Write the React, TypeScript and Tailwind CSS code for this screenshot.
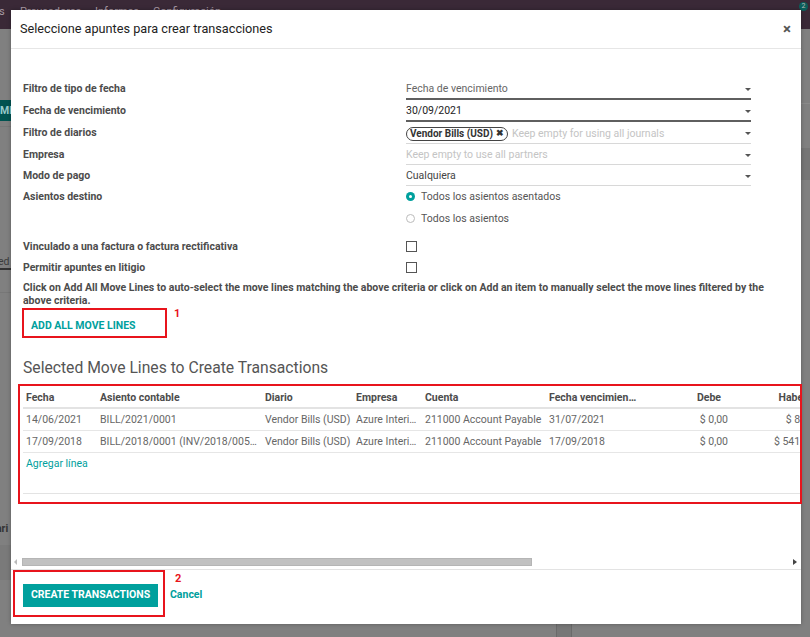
import React from "react";

const Caret = () => (
  <span className="ml-auto mr-0 inline-block w-0 h-0 border-x-[3px] border-x-transparent border-t-[3px] border-t-[#555]" />
);

function FieldRow({ label, children, h = "h-[22px]" }: any) {
  return (
    <div className={`flex items-center ${h}`}>
      <div className="w-[383px] text-[10.5px] font-bold text-[#4c4c4c]">{label}</div>
      <div className="w-[345px] h-full">{children}</div>
    </div>
  );
}

function Select({ children, dark = false }: any) {
  return (
    <div
      className={`h-full flex items-center text-[10.5px] pt-[2px] ${
        dark ? "border-b-2 border-[#5f5f5f]" : "border-b border-[#d8d8d8]"
      }`}
    >
      {children}
      <Caret />
    </div>
  );
}

const cols = [
  { t: "Fecha", w: "w-[74px]" },
  { t: "Asiento contable", w: "w-[165px]" },
  { t: "Diario", w: "w-[91px]" },
  { t: "Empresa", w: "w-[69px]" },
  { t: "Cuenta", w: "w-[124px]" },
  { t: "Fecha vencimien…", w: "w-[102px]" },
  { t: "Debe", w: "w-[85px]", r: true },
  { t: "Haber", w: "w-[86px]", r: true },
];

const rows = [
  ["14/06/2021", "BILL/2021/0001", "Vendor Bills (USD)", "Azure Interi…", "211000 Account Payable", "31/07/2021", "$ 0,00", "$ 8,50"],
  ["17/09/2018", "BILL/2018/0001 (INV/2018/005…", "Vendor Bills (USD)", "Azure Interi…", "211000 Account Payable", "17/09/2018", "$ 0,00", "$ 541,00"],
];

export default function App() {
  return (
    <div className="relative w-[810px] h-[637px] overflow-hidden bg-[#808080] font-['Roboto',sans-serif]">
      {/* page behind the dialog */}
      <div className="h-[29px] bg-[#3a2937] flex items-start pt-[4px] text-[11px] text-[#a89aa5]">
        <span className="-ml-[1px] w-[21px]">s</span>
        <span className="w-[75px]">Proveedores</span>
        <span className="w-[58px]">Informes</span>
        <span>Configuración</span>
      </div>
      <div className="absolute right-[2px] top-[2px] w-[9px] h-[9px] rounded-full bg-[#0a5e5a] text-[7px] text-[#bbb] flex items-center justify-center">2</div>
      <div className="absolute left-0 top-[100px] w-[11px] h-[21px] bg-[#005351] text-[10.5px] text-[#9cc] overflow-hidden leading-[21px] font-bold">ME</div>
      <div className="absolute left-0 top-[126px] w-[11px] border-t border-[#777]" />
      <div className="absolute left-0 top-[255px] w-[11px] overflow-hidden text-[10.5px] text-[#3c3c3c] border-b-2 border-[#333] leading-[13px] whitespace-nowrap">
        <span className="-ml-[2px]">ed</span>
      </div>
      <div className="absolute left-0 top-[292px] w-[11px] border-t border-[#777]" />
      <div className="absolute left-0 top-[521px] w-[11px] overflow-hidden text-[10.5px] text-[#333] font-bold whitespace-nowrap">
        <span className="-ml-[4px]">ari</span>
      </div>
      <div className="absolute left-0 top-[545px] w-[11px] h-[35px] bg-[#7a7a7a]" />
      <div className="absolute right-0 top-[103px] w-[9px] border-t border-[#8a8a8a]" />
      <div className="absolute right-0 top-[148px] w-[9px] h-[32px] bg-[#767676]" />
      <div className="absolute left-[556px] top-[624px] w-[16px] h-[13px] bg-[#777] border-x border-[#6a6a6a]" />

      {/* dialog */}
      <div className="absolute left-[11px] top-[10px] w-[790px] h-[614px] bg-white flex flex-col shadow-[0_0_4px_rgba(0,0,0,0.3)]">
        <div className="h-[39px] shrink-0 flex items-center justify-between pl-[9px] pr-[10px] border-b border-[#e6e6e6]">
          <div className="text-[12.7px] text-[#222]">Seleccione apuntes para crear transacciones</div>
          <div className="text-[15px] font-bold text-[#555] leading-none">×</div>
        </div>

        <div className="flex-1 flex flex-col pt-[29px] pl-[12px] overflow-hidden">
          <FieldRow label="Filtro de tipo de fecha">
            <Select dark>
              <span className="text-[#666]">Fecha de vencimiento</span>
            </Select>
          </FieldRow>
          <FieldRow label="Fecha de vencimiento">
            <Select dark>
              <span className="text-[#222]">30/09/2021</span>
            </Select>
          </FieldRow>
          <FieldRow label="Filtro de diarios">
            <Select>
              <span className="flex items-center gap-[3px] border-[1.5px] border-[#444] rounded-full px-[3px] h-[14px] text-[10px] font-bold text-[#333]">
                Vendor Bills (USD) <span className="text-[9px]">✖</span>
              </span>
              <span className="ml-[4px] text-[#c4c4c4]">Keep empty for using all journals</span>
            </Select>
          </FieldRow>
          <FieldRow label="Empresa" h="h-[21px]">
            <Select>
              <span className="text-[#c4c4c4]">Keep empty to use all partners</span>
            </Select>
          </FieldRow>
          <FieldRow label="Modo de pago" h="h-[21px]">
            <Select>
              <span className="text-[#444]">Cualquiera</span>
            </Select>
          </FieldRow>
          <FieldRow label="Asientos destino" h="h-[21px]">
            <div className="h-full flex items-center text-[10.5px] text-[#555]">
              <span className="w-[9px] h-[9px] rounded-full bg-[#00a09d] flex items-center justify-center mr-[6px]">
                <span className="w-[3px] h-[3px] rounded-full bg-white" />
              </span>
              Todos los asientos asentados
            </div>
          </FieldRow>
          <FieldRow label="" h="h-[23px]">
            <div className="h-full flex items-center text-[10.5px] text-[#555]">
              <span className="w-[9px] h-[9px] rounded-full border border-[#bbb] mr-[6px]" />
              Todos los asientos
            </div>
          </FieldRow>
          <div className="h-[6px]" />
          <FieldRow label="Vinculado a una factura o factura rectificativa" h="h-[21px]">
            <div className="h-full flex items-center">
              <span className="w-[11px] h-[11px] border border-[#555]" />
            </div>
          </FieldRow>
          <FieldRow label="Permitir apuntes en litigio" h="h-[21px]">
            <div className="h-full flex items-center">
              <span className="w-[11px] h-[11px] border border-[#555]" />
            </div>
          </FieldRow>
          <div className="mt-[3px] h-[27px] pr-[30px] text-[10.5px] font-bold text-[#4c4c4c] leading-[13px] overflow-hidden">
            Click on Add All Move Lines to auto-select the move lines matching the above criteria or click on Add an item to manually select the move lines filtered by the above criteria.
          </div>
          <div className="h-[31px] flex items-center pl-[8px] pt-[5px]">
            <span className="text-[10.5px] font-bold text-[#00a09d]">ADD ALL MOVE LINES</span>
          </div>
          <div className="mt-[19px] text-[15.7px] text-[#555] leading-[20px]">Selected Move Lines to Create Transactions</div>

          <div className="mt-[10px] flex-1 overflow-hidden">
            <div className="w-[900px] text-[10.5px]">
              <div className="flex h-[21px] items-center border-b-2 border-[#e3e3e3] font-bold text-[#4c4c4c]">
                {cols.map((c) => (
                  <div key={c.t} className={`${c.w} shrink-0 px-[3px] truncate ${c.r ? "text-right pr-[12px]" : ""}`}>
                    {c.t}
                  </div>
                ))}
              </div>
              {rows.map((r, i) => (
                <div key={i} className="flex h-[22px] items-center border-b border-[#e6e6e6] text-[#666]">
                  {r.map((v, j) => (
                    <div
                      key={j}
                      className={`${cols[j].w} shrink-0 px-[3px] whitespace-nowrap overflow-hidden ${cols[j].r ? "text-right pr-[5px]" : ""}`}
                    >
                      {v}
                    </div>
                  ))}
                </div>
              ))}
              <div className="h-[21px] flex items-center px-[3px] text-[#00a09d]">Agregar línea</div>
              <div className="h-[20px] border-b border-[#e3e3e3] w-[778px]" />
            </div>
          </div>

          {/* horizontal scrollbar */}
          <div className="h-[10px] mb-[2px] -ml-[9px] mr-[4px] flex items-center">
            <span className="w-0 h-0 border-y-[3px] border-y-transparent border-r-[3px] border-r-[#bbb] mr-[5px]" />
            <div className="flex-1 h-[8px] relative">
              <div className="w-[510px] h-[8px] bg-[#c1c1c1] border border-[#b5b5b5]" />
            </div>
            <span className="w-0 h-0 border-y-[3px] border-y-transparent border-l-[4px] border-l-[#444]" />
          </div>
        </div>

        <div className="h-[55px] shrink-0 border-t border-[#e3e3e3] flex items-center pb-[4px] pl-[12px] gap-[12px]">
          <button className="w-[135px] h-[23px] bg-[#00a09d] text-white text-[10.5px] font-bold">CREATE TRANSACTIONS</button>
          <span className="text-[10.5px] font-bold text-[#00a09d]">Cancel</span>
        </div>
      </div>

      {/* red annotations */}
      <div className="absolute left-[22px] top-[308px] w-[145px] h-[30px] border-2 border-[#e8141c]" />
      <div className="absolute left-[174px] top-[306px] text-[11px] font-bold text-[#e8141c]">1</div>
      <div className="absolute left-[18px] top-[384px] w-[784px] h-[120px] border-2 border-[#e8141c]" />
      <div className="absolute left-[13px] top-[570px] w-[152px] h-[47px] border-2 border-[#e8141c]" />
      <div className="absolute left-[175px] top-[571px] text-[11px] font-bold text-[#e8141c]">2</div>
    </div>
  );
}
